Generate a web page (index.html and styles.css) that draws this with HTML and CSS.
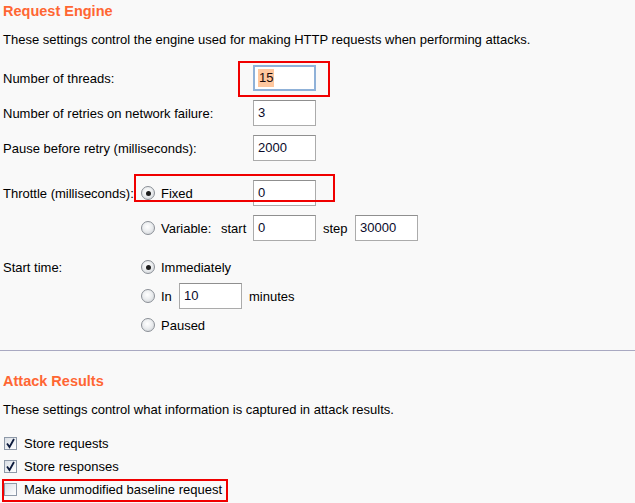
FILE: index.html
```html
<!DOCTYPE html>
<html>
<head>
<meta charset="utf-8">
<link rel="stylesheet" href="styles.css">
</head>
<body>
<main class="page">
  <section class="group">
    <h2 class="title">Request Engine</h2>
    <p class="desc">These settings control the engine used for making HTTP requests when performing attacks.</p>

    <div class="row first">
      <span class="label wide">Number of threads:</span>
      <span class="field focus"><span class="sel">15</span></span>
    </div>
    <div class="row">
      <span class="label wide">Number of retries on network failure:</span>
      <span class="field">3</span>
    </div>
    <div class="row">
      <span class="label wide">Pause before retry (milliseconds):</span>
      <span class="field">2000</span>
    </div>

    <div class="row throttle">
      <span class="label narrow">Throttle (milliseconds):</span>
      <span class="opt fixed"><span class="radio on"></span>Fixed</span>
      <span class="field">0</span>
    </div>
    <div class="row">
      <span class="label narrow"></span>
      <span class="opt variable"><span class="radio"></span>Variable:</span>
      <span class="word start">start</span>
      <span class="field">0</span>
      <span class="word step">step</span>
      <span class="field">30000</span>
    </div>

    <div class="row start-time">
      <span class="label narrow">Start time:</span>
      <span class="opt"><span class="radio on"></span>Immediately</span>
    </div>
    <div class="row tight">
      <span class="label narrow"></span>
      <span class="opt in"><span class="radio"></span>In</span>
      <span class="field">10</span>
      <span class="word minutes">minutes</span>
    </div>
    <div class="row tight">
      <span class="label narrow"></span>
      <span class="opt"><span class="radio"></span>Paused</span>
    </div>
  </section>

  <hr class="sep">

  <section class="group">
    <h2 class="title">Attack Results</h2>
    <p class="desc">These settings control what information is captured in attack results.</p>
    <div class="checks">
      <label class="check"><span class="box on"><svg viewBox="0 0 13 13" width="13" height="13"><path d="M3 6.5 L5.5 10 L10 2" fill="none" stroke="#0c1a3c" stroke-width="1.8"/></svg></span>Store requests</label>
      <label class="check"><span class="box on"><svg viewBox="0 0 13 13" width="13" height="13"><path d="M3 6.5 L5.5 10 L10 2" fill="none" stroke="#0c1a3c" stroke-width="1.8"/></svg></span>Store responses</label>
      <label class="check"><span class="box"></span>Make unmodified baseline request</label>
    </div>
  </section>

  <div class="mark mark-threads"></div>
  <div class="mark mark-throttle"></div>
  <div class="mark mark-baseline"></div>
</main>
</body>
</html>
```

FILE: styles.css
```css
html, body {
  margin: 0;
  padding: 0;
  background: #f9f9f9;
}
body {
  font-family: "Liberation Sans", Arial, sans-serif;
  font-size: 13px;
  color: #000;
}
.page {
  position: relative;
  width: 635px;
  height: 503px;
  overflow: hidden;
}
.group {
  padding-left: 3px;
}
.title {
  margin: 0;
  height: 22px;
  line-height: 22px;
  font-size: 14.5px;
  font-weight: bold;
  color: #ff6633;
}
.desc {
  margin: 10px 0 0;
  line-height: 16px;
  height: 16px;
  white-space: nowrap;
}
.row {
  display: flex;
  align-items: center;
  height: 26px;
  margin-top: 9px;
  white-space: nowrap;
}
.row.first { margin-top: 17px; }
.row.throttle { margin-top: 19px; }
.row.start-time { margin-top: 13px; }
.row.tight { margin-top: 3px; }
.label.wide { width: 250px; flex: none; }
.label.narrow { width: 138px; flex: none; }
.opt {
  display: flex;
  align-items: center;
  flex: none;
}
.opt.fixed { width: 112px; }
.opt.variable { width: 80px; }
.opt.in { width: 38px; }
.radio {
  width: 12px;
  height: 12px;
  border: 1px solid #8a8f96;
  border-radius: 50%;
  background: radial-gradient(circle at 45% 40%, #ffffff 0%, #eceef0 45%, #c9cdd2 100%);
  margin-right: 6px;
  flex: none;
  position: relative;
  box-sizing: content-box;
}
.radio.on::after {
  content: "";
  position: absolute;
  left: 3.5px;
  top: 3.5px;
  width: 5px;
  height: 5px;
  border-radius: 50%;
  background: #1e1e1e;
}
.field {
  box-sizing: border-box;
  width: 63px;
  height: 26px;
  flex: none;
  background: #fff;
  border: 1px solid #ababab;
  border-top-color: #8f8f8f;
  padding-left: 4px;
  line-height: 24px;
  color: #0a0a2a;
  display: flex;
  align-items: center;
}
.field.focus {
  border: 2px solid #8fb1d8;
  padding-left: 3px;
}
.sel {
  background: #ffc79e;
  line-height: 18px;
  padding: 0 1px;
  color: #1a0a0a;
}
.word { flex: none; }
.word.start { width: 32px; }
.word.step { width: 32px; margin-left: 7px; }
.word.minutes { margin-left: 7px; }
.sep {
  margin: 12px 0 0;
  border: 0;
  height: 1px;
  background: #a9a9c2;
}
.group + .sep + .group .title { margin-top: 19px; }
.checks {
  margin-top: 14px;
  display: flex;
  flex-direction: column;
}
.check {
  display: flex;
  align-items: center;
  height: 23px;
}
.box {
  box-sizing: border-box;
  width: 13px;
  height: 13px;
  margin-left: 1px;
  margin-right: 7px;
  border: 1px solid #8e99a8;
  background: linear-gradient(135deg, #d9dee5 0%, #f4f6f8 70%, #ffffff 100%);
  position: relative;
  flex: none;
}
.box svg {
  position: absolute;
  left: -1px;
  top: -1px;
}
.mark {
  position: absolute;
  border: 2px solid #f00000;
  box-sizing: border-box;
}
.mark-threads { left: 238px; top: 61px; width: 92px; height: 36px; }
.mark-throttle { left: 134px; top: 174px; width: 201px; height: 28px; }
.mark-baseline { left: 2px; top: 479px; width: 226px; height: 23px; }
```
